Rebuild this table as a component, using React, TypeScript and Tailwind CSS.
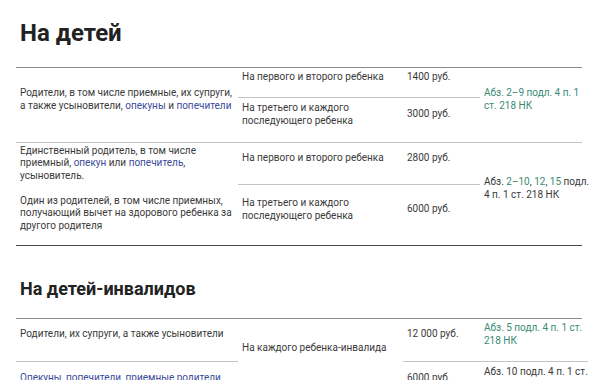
const FONT = "font-['Roboto',_'Liberation_Sans',_sans-serif]";

function Link({ children }: { children: React.ReactNode }) {
  return <span className="text-[#3b4c9b]">{children}</span>;
}

function Ref({ children }: { children: React.ReactNode }) {
  return <span className="text-[#3a8a73]">{children}</span>;
}

const cell = "flex items-center whitespace-nowrap pl-1 pr-1 pt-[3px] pb-[14px]";
const subLine = "border-b border-[#c4c4c4]";

export default function App() {
  return (
    <div className={`${FONT} bg-white w-[598px] h-[380px] overflow-hidden px-4 text-[10px] leading-[12.5px] text-[#3a3a3a]`}>
      <h1 className="pt-[17px] pl-1 text-[24px] leading-[32px] font-bold text-[#222]">На детей</h1>

      <div className="mt-[18px] border-y border-t-[#8c8c8c] border-b-[#4a4a4a]">
        {/* row 1 */}
        <div className="grid grid-cols-[222px_165px_77px_108px] grid-rows-[30px_44px]">
          <div className={`${cell} row-span-2`}>
            <p>
              Родители, в том числе приемные, их супруги,
              <br />а также усыновители, <Link>опекуны</Link> и <Link>попечители</Link>
            </p>
          </div>
          <div className={`${cell} ${subLine}`}>На первого и второго ребенка</div>
          <div className={`${cell} ${subLine}`}>1400 руб.</div>
          <div className={`${cell} row-span-2`}>
            <p>
              <Ref>
                Абз. 2–9 подл. 4 п. 1
                <br />
                ст. 218 НК
              </Ref>
            </p>
          </div>
          <div className={cell}>
            <p>
              На третьего и каждого
              <br />
              последующего ребенка
            </p>
          </div>
          <div className={cell}>3000 руб.</div>
        </div>

        {/* row 2 */}
        <div className="grid grid-cols-[222px_165px_77px_108px] grid-rows-[42px_60px] border-t border-[#c4c4c4]">
          <div className="row-span-2 whitespace-nowrap pl-1 pr-1 pt-[3px] pb-[14px] flex flex-col justify-center gap-[12.5px]">
            <p>
              Единственный родитель, в том числе
              <br />
              приемный, <Link>опекун</Link> или <Link>попечитель</Link>,
              <br />
              усыновитель.
            </p>
            <p>
              Один из родителей, в том числе приемных,
              <br />
              получающий вычет на здорового ребенка за
              <br />
              другого родителя
            </p>
          </div>
          <div className={`${cell} ${subLine}`}>На первого и второго ребенка</div>
          <div className={`${cell} ${subLine}`}>2800 руб.</div>
          <div className={`${cell} row-span-2`}>
            <p>
              Абз. <Ref>2–10</Ref>, <Ref>12</Ref>, <Ref>15</Ref> подл.
              <br />4 п. 1 ст. 218 НК
            </p>
          </div>
          <div className={cell}>
            <p>
              На третьего и каждого
              <br />
              последующего ребенка
            </p>
          </div>
          <div className={cell}>6000 руб.</div>
        </div>
      </div>

      <h2 className="mt-[31px] pl-1 text-[18px] leading-[24px] font-bold text-[#222]">На детей-инвалидов</h2>

      <div className="mt-[17px] border-t border-[#8c8c8c]">
        <div className="grid grid-cols-[222px_165px_77px_108px] grid-rows-[43px_43px]">
          <div className={`${cell} ${subLine}`}>Родители, их супруги, а также усыновители</div>
          <div className="row-span-2 flex items-center whitespace-nowrap pl-1 pr-1 pt-[3px] pb-[30px]">На каждого ребенка-инвалида</div>
          <div className={`${cell} ${subLine}`}>12 000 руб.</div>
          <div className={`${cell} ${subLine}`}>
            <p>
              <Ref>
                Абз. 5 подл. 4 п. 1 ст.
                <br />
                218 НК
              </Ref>
            </p>
          </div>
          <div className="flex items-center whitespace-nowrap pl-1 pr-1 pt-[4px] pb-[14px]">
            <Link>Опекуны, попечители, приемные родители</Link>
          </div>
          <div className="flex items-center whitespace-nowrap pl-1 pr-1 pt-[4px] pb-[14px]">6000 руб.</div>
          <div className="flex items-center whitespace-nowrap pl-1 pr-1 pt-[4px] pb-[14px]">
            <p>
              Абз. 10 подл. 4 п. 1 ст.
              <br />
              <Ref>218 НК</Ref>
            </p>
          </div>
        </div>
      </div>
    </div>
  );
}
